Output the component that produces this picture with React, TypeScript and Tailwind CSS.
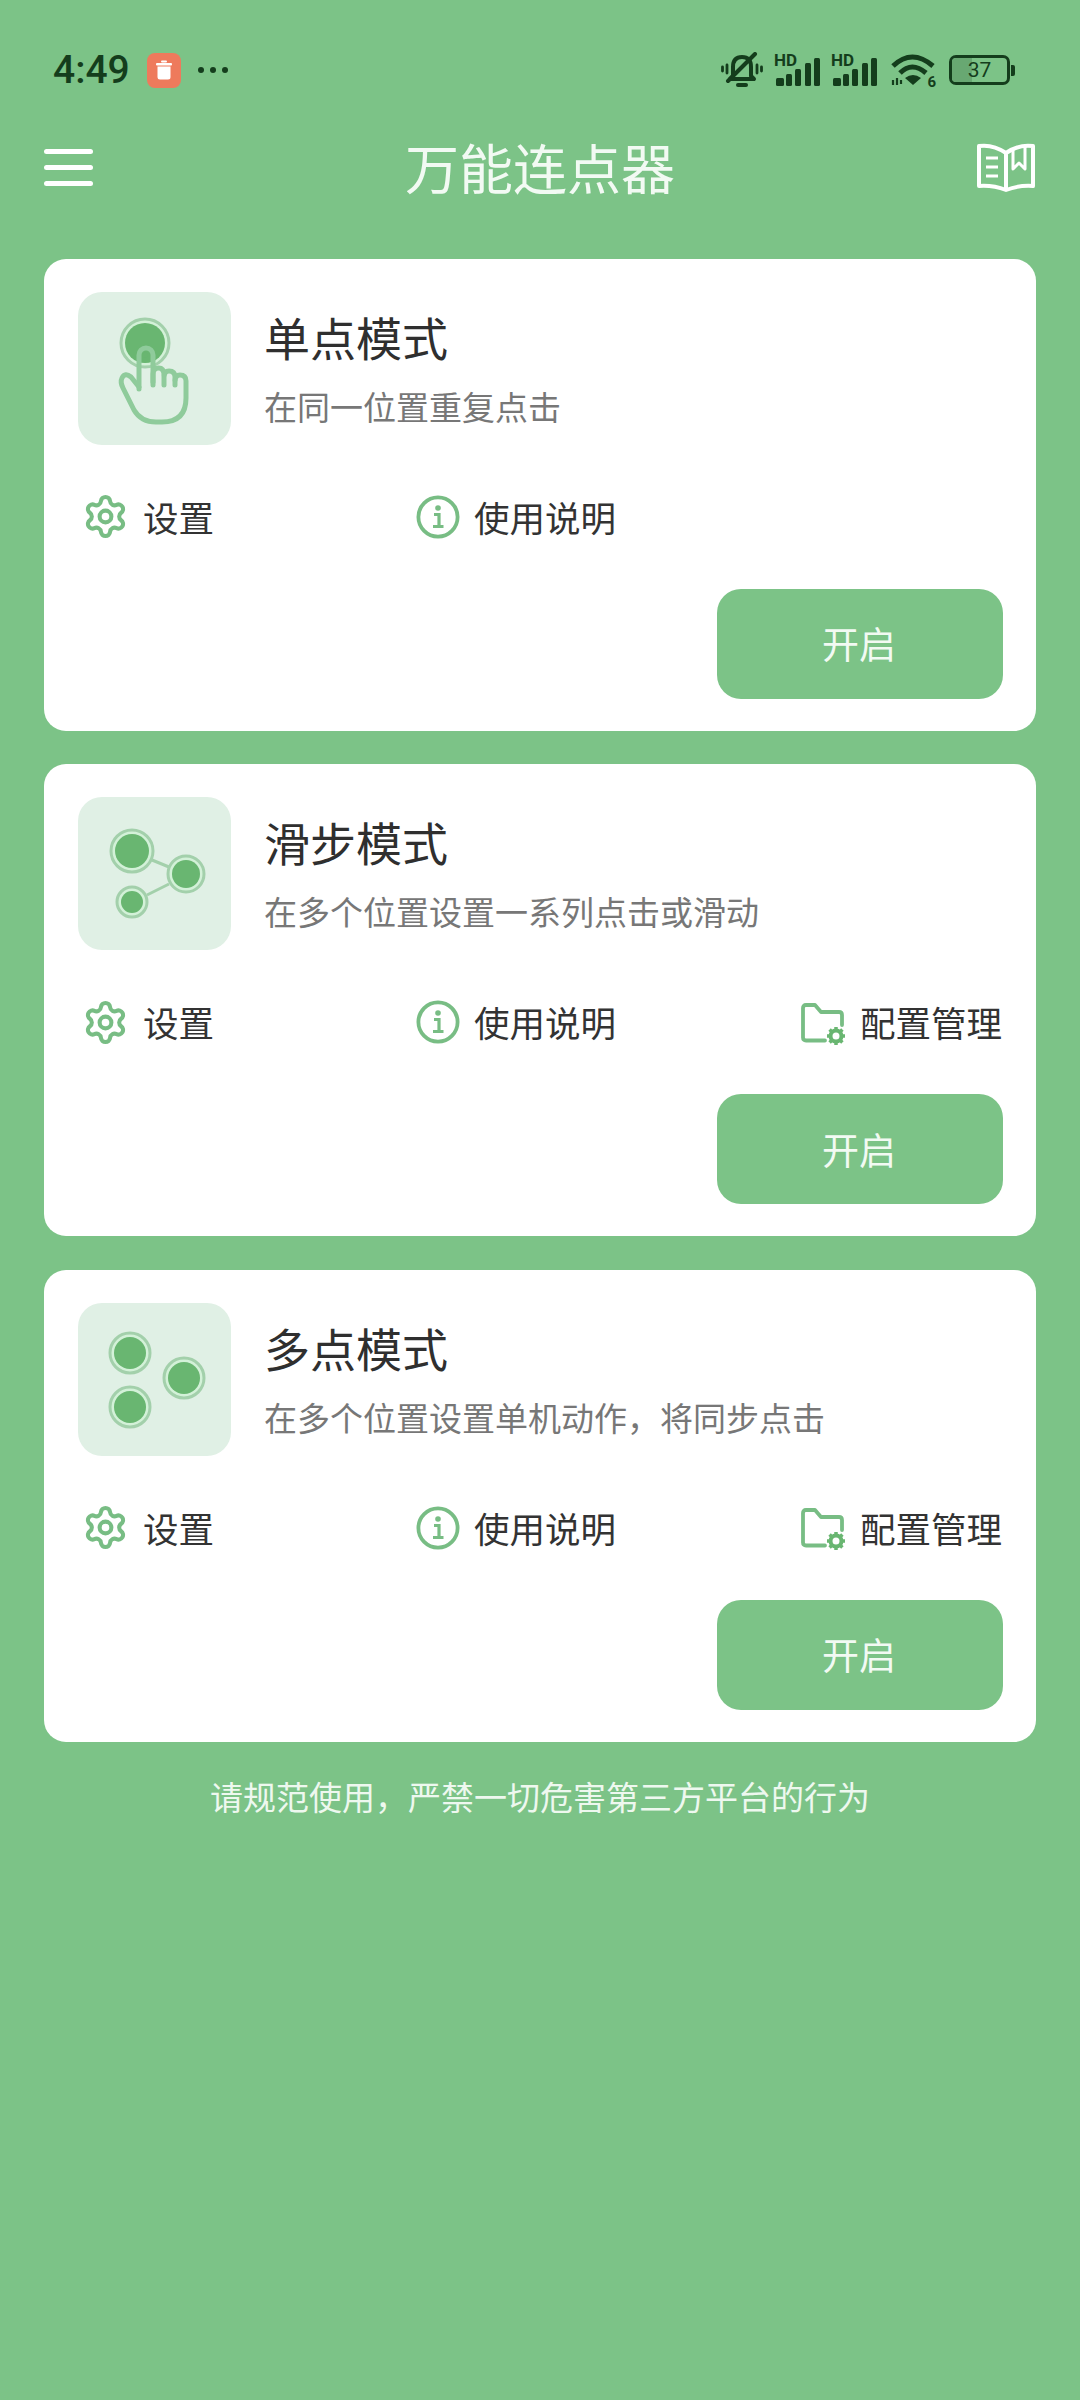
import { Settings } from "lucide-react";

const cjk = "font-['Noto_Sans_CJK_SC','Noto_Sans',sans-serif]";

function Dot({ x, y, r }: { x: number; y: number; r: number }) {
    return (
        <>
            <circle cx={x} cy={y} r={r} fill="#d3f1d8" stroke="#a3d0ab" strokeWidth="3" />
            <circle cx={x} cy={y} r={r - 4} fill="#69b671" />
        </>
    );
}

function TapIcon() {
    return (
        <svg width="153" height="153" viewBox="0 0 153 153" fill="none">
            <Dot x={67} y={51} r={24} />
            <g stroke="#8fcb9b" strokeWidth="5" strokeLinecap="round" strokeLinejoin="round">
                <path d="M61 97V63a7 7 0 0 1 14 0v27" />
                <path d="M61 95L53 85Q47 80 44 86Q42 90 45 96L56 118Q63 130 78 130H84Q108 130 108 106V89Q108 83 102 83Q97 83 97 89V93" />
                <path d="M97 88V85Q97 79 91 79Q86 79 86 85V93" />
                <path d="M86 83Q86 76 80.5 76Q75 76 75 82V93" />
            </g>
            <circle cx="67" cy="63" r="2.5" fill="#69b671" />
        </svg>
    );
}

function SwipeIcon() {
    return (
        <svg width="153" height="153" viewBox="0 0 153 153" fill="none">
            <path d="M74 63L91 70M69 98L91 87" stroke="#a3d0ab" strokeWidth="3" />
            <Dot x={54} y={54} r={21} />
            <Dot x={108} y={77} r={18} />
            <Dot x={54} y={105} r={15} />
        </svg>
    );
}

function MultiIcon() {
    return (
        <svg width="153" height="153" viewBox="0 0 153 153" fill="none">
            <Dot x={52} y={50} r={20} />
            <Dot x={106} y={75} r={20} />
            <Dot x={52} y={104} r={20} />
        </svg>
    );
}

function InfoIcon() {
    return (
        <svg width="44" height="44" viewBox="0 0 44 44" fill="none" stroke="#78bd84" strokeWidth="3.8">
            <circle cx="22" cy="22" r="19.6" />
            <circle cx="22" cy="13" r="2.8" fill="#78bd84" stroke="none" />
            <path d="M18 19.500H23V31M17 31.500H27.500" strokeWidth="3.200" />
        </svg>
    );
}

function FolderIcon() {
    return (
        <svg className="mt-[5px] ml-[1px]" width="46" height="44" viewBox="0 0 46 44" fill="none">
            <path
                d="M24 37.500H5Q2 37.500 2 34.500V5Q2 2 5 2H14L20 9H38Q41 9 41 12V22"
                stroke="#78bd84"
                strokeWidth="3.800"
                strokeLinejoin="round"
                strokeLinecap="round"
            />
            <circle cx="35" cy="33" r="5.500" stroke="#69b671" strokeWidth="4" />
            <path
                d="M35 24V27M35 39V42M26 33H29M41 33H44M28.600 26.600L30.800 28.800M39.200 37.200L41.400 39.400M41.400 26.600L39.200 28.800M30.800 37.200L28.600 39.400"
                stroke="#69b671"
                strokeWidth="3.500"
            />
        </svg>
    );
}

function Signal() {
    return (
        <div className="relative w-[47px] h-[32px]">
            <span className="absolute left-0 top-[-2px] text-[17px] leading-[17px] font-bold text-[#143d1c] font-['Roboto',sans-serif]">
                HD
            </span>
            <svg className="absolute left-0 top-0" width="47" height="32" viewBox="0 0 47 32" fill="#143d1c">
                <rect x="2" y="24" width="8" height="8" rx="1.500" />
                <rect x="12" y="20" width="6" height="12" rx="1.500" />
                <rect x="21" y="15" width="6" height="17" rx="1.500" />
                <rect x="31" y="9" width="6" height="23" rx="1.500" />
                <rect x="40" y="4" width="6" height="28" rx="1.500" />
            </svg>
        </div>
    );
}

function StatusBar() {
    return (
        <div className="h-[140px] flex items-center pl-[53px] pr-[65px]">
            <span className="w-[74px] text-[39px] leading-[44px] font-medium text-[#143d1c] font-['Roboto',sans-serif]">
                4:49
            </span>
            <div className="ml-[20px] w-[34px] h-[35px] rounded-[8px] bg-[#ee7a5c] flex items-center justify-center">
                <svg width="18" height="20" viewBox="0 0 18 20" fill="#fff">
                    <rect x="1" y="3" width="16" height="2.400" rx="1" />
                    <rect x="6" y="0.500" width="6" height="2" rx="1" />
                    <path d="M2.500 6.500H15.500V17Q15.500 19.500 13 19.500H5Q2.500 19.500 2.500 17Z" />
                </svg>
            </div>
            <div className="ml-[17px] flex gap-[6px]">
                <span className="w-[6px] h-[6px] rounded-full bg-[#143d1c]" />
                <span className="w-[6px] h-[6px] rounded-full bg-[#143d1c]" />
                <span className="w-[6px] h-[6px] rounded-full bg-[#143d1c]" />
            </div>
            <div className="ml-auto flex items-center">
                <svg width="42" height="36" viewBox="0 0 42 36" fill="none" stroke="#143d1c" strokeWidth="4" strokeLinecap="round">
                    <path d="M12 24V15Q12 5 21 5Q30 5 30 15V24L33 27H9Z" strokeLinejoin="round" />
                    <path d="M17 33H25" />
                    <path d="M7 29L34 2" />
                    <path d="M6 13V21M1.500 15V19M36 13V21M40.500 15V19" strokeWidth="2.800" />
                </svg>
                <div className="ml-[11px]">
                    <Signal />
                </div>
                <div className="ml-[10px]">
                    <Signal />
                </div>
                <div className="relative ml-[13px] w-[44px] h-[34px]">
                    <svg width="44" height="34" viewBox="0 0 44 34" fill="none" stroke="#143d1c" strokeWidth="5">
                        <path d="M2 13Q21 -5 42 13" />
                        <path d="M9 20Q21 8 35 20" />
                        <path d="M22 32L14 25Q22 19 30 25Z" fill="#143d1c" stroke="none" />
                        <path d="M2 27V32M6 25V32M10 27V31" strokeWidth="2.200" />
                    </svg>
                    <span className="absolute right-[-1px] bottom-[-3px] text-[15px] leading-[15px] font-bold text-[#143d1c] font-['Roboto',sans-serif]">
                        6
                    </span>
                </div>
                <div className="ml-[14px] flex items-center gap-[1px]">
                    <div className="relative w-[61px] h-[30px] rounded-[7px] border-[3px] border-[#143d1c] overflow-hidden flex items-center justify-center">
                        <div className="absolute left-0 top-0 bottom-0 w-[37%] bg-[#68a872]" />
                        <span className="relative text-[21px] leading-[22px] text-[#143d1c] font-['Roboto',sans-serif]">37</span>
                    </div>
                    <div className="w-[4px] h-[11px] rounded-r-[2px] bg-[#143d1c]" />
                </div>
            </div>
        </div>
    );
}

function Header() {
    return (
        <div className="h-[56px] relative flex items-center justify-center">
            <div className="absolute left-[44px] top-[9px] w-[49px] flex flex-col gap-[11px]">
                <div className="h-[5px] rounded-full bg-white" />
                <div className="h-[5px] rounded-full bg-white" />
                <div className="h-[5px] rounded-full bg-white" />
            </div>
            <h1 className={`text-[54px] leading-[56px] text-[#f2faf3] -mt-[2px] ${cjk}`}>万能连点器</h1>
            <svg className="absolute left-[975px] top-[3px]" width="62" height="50" viewBox="0 0 62 50" fill="none" stroke="#fff" strokeWidth="4" strokeLinejoin="round">
                <path d="M31 10Q18 1 4 3V43Q18 42 31 47Q44 42 58 43V3Q44 1 31 10V47" />
                <path d="M38 7V26L44 20L50 26V4" strokeWidth="3" />
                <path d="M11 15H23M11 24H23M11 33H23" strokeWidth="3" />
            </svg>
        </div>
    );
}

function Action({ icon, label, className }: { icon: React.ReactNode; label: string; className?: string }) {
    return (
        <div className={`flex items-center ${className ?? ""}`}>
            {icon}
            <span className={`text-[35.5px] leading-[48px] text-[#333] ${cjk}`}>{label}</span>
        </div>
    );
}

function ModeCard({ icon, title, desc, manage }: { icon: React.ReactNode; title: string; desc: string; manage?: boolean }) {
    return (
        <div className="h-[472px] rounded-[22px] bg-white pt-[33px] flex flex-col">
            <div className="flex pl-[34px]">
                <div className="w-[153px] h-[153px] rounded-[24px] bg-[#e0f0e5]">{icon}</div>
                <div className="ml-[33px] pt-[14px]">
                    <div className={`text-[46px] leading-[60px] text-[#2f2f2f] ${cjk}`}>{title}</div>
                    <div className={`mt-[18px] text-[33px] leading-[44px] text-[#777] ${cjk}`}>{desc}</div>
                </div>
            </div>
            <div className="mt-[47px] h-[50px] flex pl-[40px]">
                <Action
                    className="w-[332px] gap-[16px]"
                    icon={<Settings size={47} color="#78bd84" strokeWidth={2.1} className="ml-[-2px] mr-[-2px]" />}
                    label="设置"
                />
                <Action className="w-[384px] gap-[14px]" icon={<InfoIcon />} label="使用说明" />
                {manage && <Action className="gap-[13px]" icon={<FolderIcon />} label="配置管理" />}
            </div>
            <button className={`mt-[47px] ml-auto mr-[33px] w-[286px] h-[110px] rounded-[24px] bg-[#7cc387] text-[37px] text-[#f2faf3] ${cjk}`}>
                <span className="mr-[2px]">开启</span>
            </button>
        </div>
    );
}

export default function App() {
    return (
        <div className="w-[1080px] h-[2400px] bg-[#7cc387] overflow-hidden">
            <StatusBar />
            <Header />
            <div className="mt-[62.8px] mx-[44px] flex flex-col gap-[33.5px]">
                <ModeCard icon={<TapIcon />} title="单点模式" desc="在同一位置重复点击" />
                <ModeCard icon={<SwipeIcon />} title="滑步模式" desc="在多个位置设置一系列点击或滑动" manage />
                <ModeCard icon={<MultiIcon />} title="多点模式" desc="在多个位置设置单机动作，将同步点击" manage />
            </div>
            <p className={`mt-[31px] text-center text-[33px] leading-[46px] text-[#eef8ef] ${cjk}`}>
                请规范使用，严禁一切危害第三方平台的行为
            </p>
        </div>
    );
}
